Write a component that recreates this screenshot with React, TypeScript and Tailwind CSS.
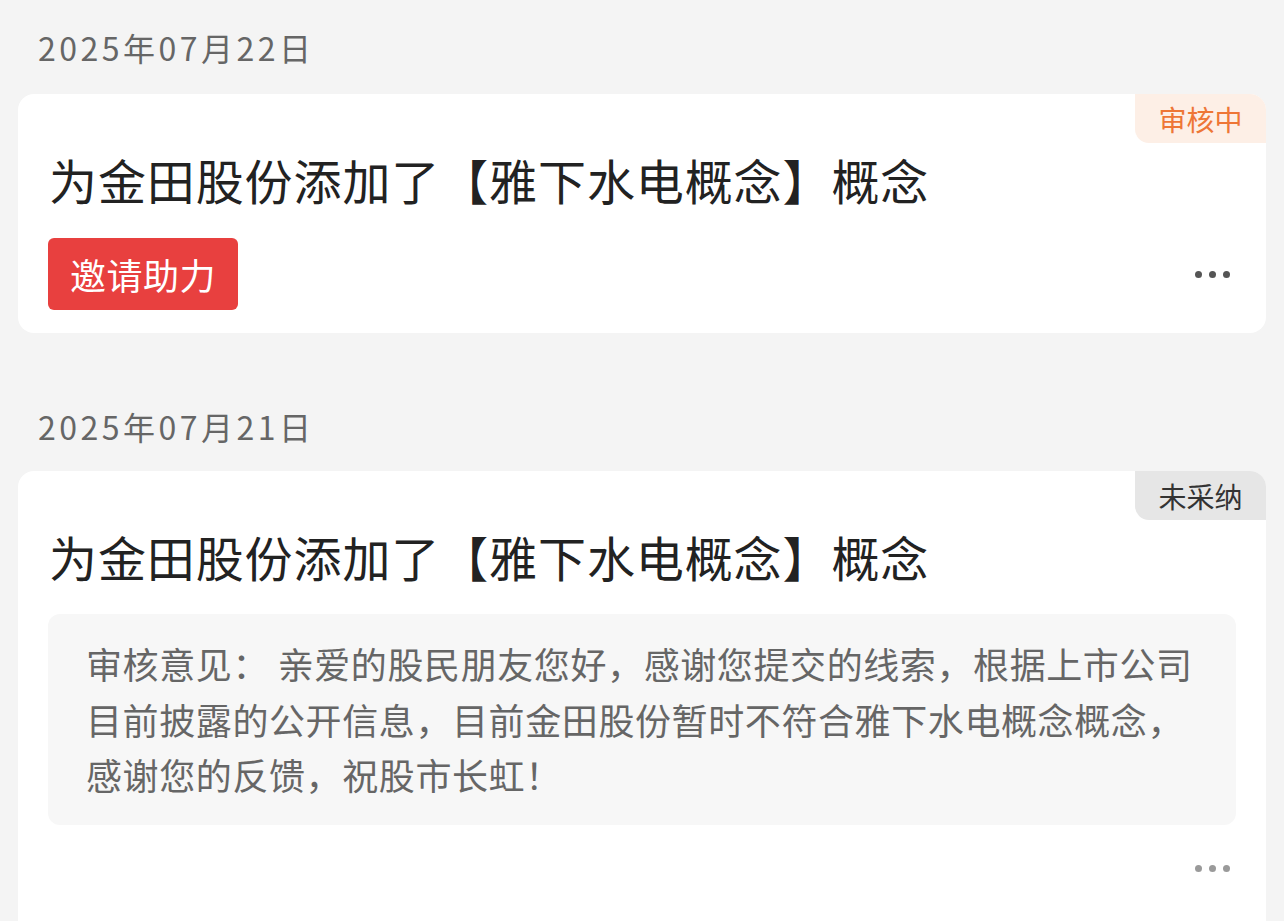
const font = { fontFamily: '"Noto Sans CJK SC", "Noto Sans", sans-serif' }

function Dots({ light }: { light?: boolean }) {
  const c = light ? 'bg-[#9a9a9a]' : 'bg-[#555555]'
  return (
    <div className="flex items-center gap-[7px]">
      <span className={`w-[7px] h-[7px] rounded-full ${c}`} />
      <span className={`w-[7px] h-[7px] rounded-full ${c}`} />
      <span className={`w-[7px] h-[7px] rounded-full ${c}`} />
    </div>
  )
}

export default function App() {
  return (
    <main className="min-h-screen bg-[#f4f4f4] px-[18px] pt-[23px] overflow-hidden" style={font}>
      {/* 第一条 */}
      <div className="text-[32px] leading-[48px] text-[#666666] pl-[20px] tracking-[3.5px]">2025年07月22日</div>
      <div className="relative mt-[23px] bg-white rounded-[16px] pt-[49px] pb-[23px] pl-[30px] pr-[36px]">
        <div className="absolute top-0 right-0 w-[131px] h-[49px] flex items-center justify-center bg-[#fdefe6] text-[#ee7636] text-[28px] rounded-tr-[16px] rounded-bl-[14px]">
          审核中
        </div>
        <h2 className="text-[48px] leading-[72px] text-[#222222] tracking-[0.9px] pl-[1px]">为金田股份添加了【雅下水电概念】概念</h2>
        <div className="mt-[23px] flex items-center justify-between">
          <button className="h-[72px] px-[22px] bg-[#e8403f] text-white text-[36px] rounded-[6px] tracking-[0.5px]">邀请助力</button>
          <Dots />
        </div>
      </div>

      {/* 第二条 */}
      <div className="mt-[69px] text-[32px] leading-[48px] text-[#666666] pl-[20px] tracking-[3.5px]">2025年07月21日</div>
      <div className="relative mt-[21px] bg-white rounded-[16px] pt-[49px] pl-[30px] pr-[30px] pb-[60px]">
        <div className="absolute top-0 right-0 w-[131px] h-[49px] flex items-center justify-center bg-[#e6e6e6] text-[#333333] text-[28px] rounded-tr-[16px] rounded-bl-[14px]">
          未采纳
        </div>
        <h2 className="text-[48px] leading-[72px] text-[#222222] tracking-[0.9px] pl-[1px]">为金田股份添加了【雅下水电概念】概念</h2>
        <div className="mt-[22px] bg-[#f7f7f7] rounded-[12px] pt-[22px] pb-[22px] pl-[38px] pr-[20px] text-[36px] leading-[55.5px] text-[#666666] tracking-[0.6px]">
          审核意见： 亲爱的股民朋友您好，感谢您提交的线索，根据上市公司目前披露的公开信息，目前金田股份暂时不符合雅下水电概念概念，感谢您的反馈，祝股市长虹！
        </div>
        <div className="mt-[24px] h-[40px] flex items-center justify-end pr-[6px]">
          <Dots light />
        </div>
      </div>
    </main>
  )
}
